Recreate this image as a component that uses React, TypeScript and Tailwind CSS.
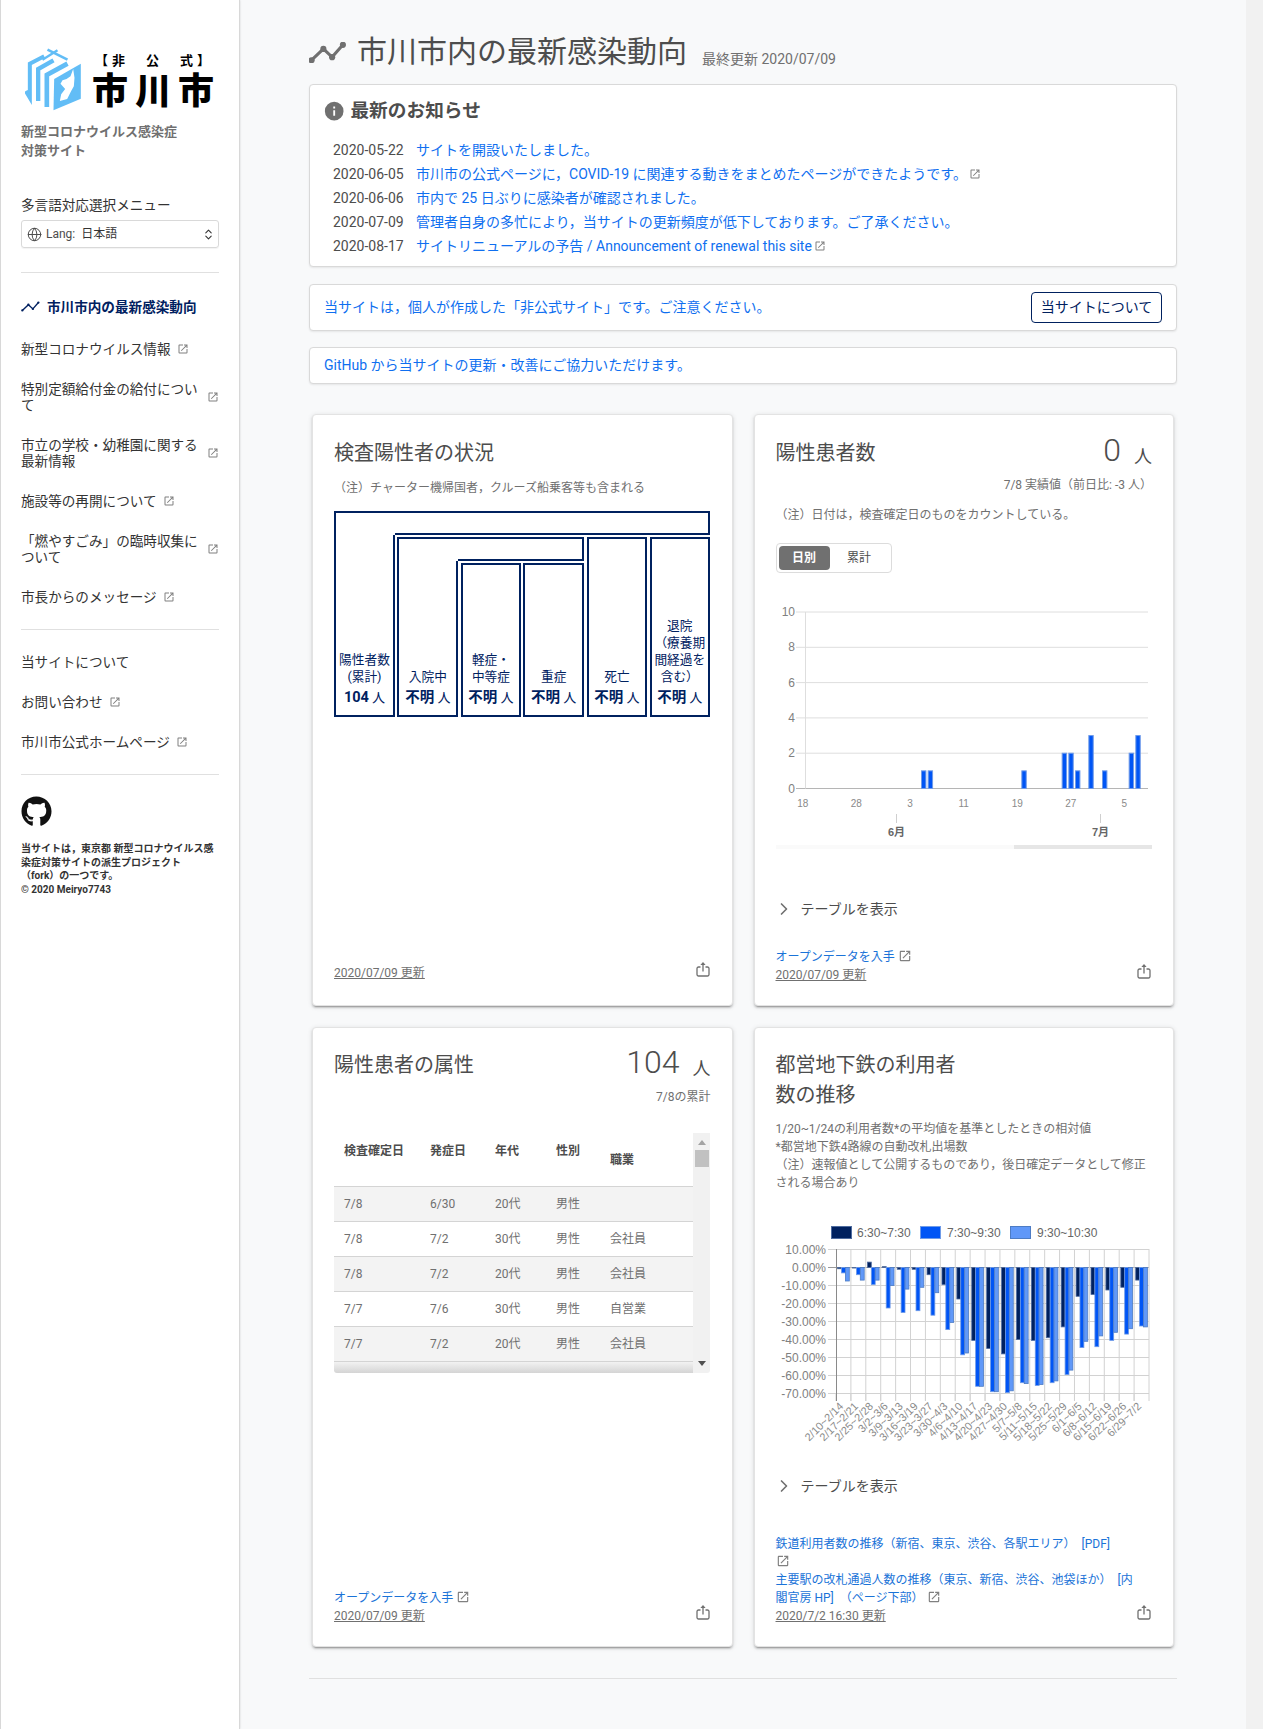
import { ChevronRight, ChevronsUpDown, Globe } from "lucide-react";
import { FaGithub } from "react-icons/fa";

const EXTERNAL =
  "M14,3V5H17.59L7.76,14.83L9.17,16.24L19,6.41V10H21V3M19,19H5V5H12V3H5C3.89,3 3,3.9 3,5V19A2,2 0 0,0 5,21H19A2,2 0 0,0 21,19V12H19V19Z";
const INFO =
  "M13,9H11V7H13M13,17H11V11H13M12,2A10,10 0 0,0 2,12A10,10 0 0,0 12,22A10,10 0 0,0 22,12A10,10 0 0,0 12,2Z";

// full-width punctuation
const LP = "\uFF08";
const RP = "\uFF09";
const CM = "\uFF0C";
const SP = "\u3000";

const ExternalIcon = ({ size = 12, className = "" }: { size?: number; className?: string }) => (
  <svg viewBox="0 0 24 24" width={size} height={size} className={`inline-block shrink-0 fill-[#808080] ${className}`}>
    <path d={EXTERNAL} />
  </svg>
);

const TrendIcon = ({ w, h, color, sw, r }: { w: number; h: number; color: string; sw: number; r: number }) => (
  <svg viewBox="0 0 36 20" width={w} height={h} className="shrink-0">
    <polyline points="2.5,17.5 14,6.5 22.5,14.5 33,2.5" fill="none" stroke={color} strokeWidth={sw} />
    {[
      [2.5, 17.5],
      [14, 6.5],
      [22.5, 14.5],
      [33, 2.5],
    ].map(([cx, cy]) => (
      <circle key={cx} cx={cx} cy={cy} r={r} fill={color} />
    ))}
  </svg>
);

const ShareButton = () => (
  <svg viewBox="0 0 14 15" width={14} height={15} className="mr-[1px] mb-[5px] shrink-0">
    <path
      d="M4.5 5 H2.5 a1.5 1.5 0 0 0 -1.5 1.5 V12.5 a1.5 1.5 0 0 0 1.5 1.5 H11.5 a1.5 1.5 0 0 0 1.5 -1.5 V6.5 a1.5 1.5 0 0 0 -1.5 -1.5 H9.5 M7 9.5 V2"
      fill="none"
      stroke="#707070"
      strokeWidth={1.3}
    />
    <path d="M4.4 3 L7 0 L9.6 3 Z" fill="#707070" />
  </svg>
);

const Logo = () => (
  <div className="flex items-start pl-[4px]">
    <svg viewBox="78 140 170 192" width={57} height={64} className="shrink-0">
      <g fill="none" stroke="#62bdf6">
        <path d="M145 148 L205 178" strokeWidth={8} />
        <path d="M130 178 L175 150" strokeWidth={7} />
        <path d="M80 272 L92 292 V190 L135 168" strokeWidth={12} />
        <path d="M117 302 V206 L163 180" strokeWidth={13} />
        <path d="M143 320 V224 L205 190" strokeWidth={14} />
      </g>
      <path d="M165 236 L245 190 V295 L163 330 Z" fill="#62bdf6" />
      <path
        d="M222 206 L214 228 L202 236 L190 240 L184 250 L198 266 L186 282 L182 302 L204 296 L216 272 L224 258 L226 232 Z"
        fill="#fff"
      />
    </svg>
    <div className="ml-[10px] flex flex-col pt-[5px] font-['Noto_Sans_CJK_JP',sans-serif] text-black">
      <div className="h-[16px] pl-[3px] text-[13px] leading-[16px] font-bold tracking-[4px] whitespace-pre">{`【非${SP}公${SP}式】`}</div>
      <div className="mt-[1px] h-[38px] text-[36px] leading-[38px] font-black tracking-[7px] whitespace-nowrap">市川市</div>
    </div>
  </div>
);

const topNav = [
  { text: "新型コロナウイルス情報" },
  { text: "特別定額給付金の給付について" },
  { text: "市立の学校・幼稚園に関する最新情報" },
  { text: "施設等の再開について" },
  { text: "「燃やすごみ」の臨時収集について" },
  { text: "市長からのメッセージ" },
];

const NavItem = ({ text, external = true }: { text: string; external?: boolean }) => (
  <li className="flex items-center py-[12px] text-[13.6px] leading-[16px] text-[#333]">
    <span className="max-w-[180px]">{text}</span>
    {external && <ExternalIcon className="ml-[6px]" />}
  </li>
);

const Sidebar = () => (
  <aside className="w-[240px] shrink-0 border-x border-[#d8d8d8] bg-white pt-[47px] pl-[20px] pr-[20px] shadow-[0_0_2px_rgba(0,0,0,0.15)]">
    <Logo />
    <p className="mt-[11px] text-[13px] leading-[19px] font-bold text-[#707070]">
      新型コロナウイルス感染症
      <br />
      対策サイト
    </p>
    <p className="mt-[36px] text-[13.6px] leading-[18px] text-[#333]">多言語対応選択メニュー</p>
    <div className="mt-[6px] flex h-[28px] items-center rounded-[3px] border border-[#d9d9d9] pl-[5px] pr-[3px] shadow-[0_1px_1px_rgba(0,0,0,0.05)]">
      <Globe size={15} className="text-[#4d4d4d]" strokeWidth={1.6} />
      <span className="ml-[4px] text-[12px] text-[#4d4d4d]">Lang:</span>
      <span className="ml-[6px] text-[12px] text-[#333]">日本語</span>
      <ChevronsUpDown size={13} className="ml-auto text-[#333]" />
    </div>
    <hr className="mt-[24px] border-[#e0e0e0]" />
    <ul className="mt-[13px]">
      <li className="flex items-center pt-[12.7px] pb-[14.7px] text-[13.6px] leading-[16px] font-bold text-[#002060]">
        <TrendIcon w={19} h={11} color="#002060" sw={2.6} r={2.2} />
        <span className="ml-[7px] whitespace-nowrap">市川市内の最新感染動向</span>
      </li>
      {topNav.map((item) => (
        <NavItem key={item.text} text={item.text} />
      ))}
    </ul>
    <hr className="mt-[12px] border-[#e0e0e0]" />
    <ul className="mt-[12px]">
      <NavItem text="当サイトについて" external={false} />
      <NavItem text="お問い合わせ" />
      <NavItem text="市川市公式ホームページ" />
    </ul>
    <hr className="mt-[12px] border-[#e0e0e0]" />
    <FaGithub size={31} className="mt-[21px] text-[#111]" />
    <p className="mt-[15px] text-[10px] leading-[13.5px] font-bold text-[#333]">
      {`当サイトは${CM}東京都 新型コロナウイルス感染症対策サイトの派生プロジェクト`}
      <br />
      {`${LP}fork${RP}の一つです。`}
      <br />© 2020 Meiryo7743
    </p>
  </aside>
);

const news = [
  { date: "2020-05-22", text: "サイトを開設いたしました。" },
  { date: "2020-06-05", text: `市川市の公式ページに${CM}COVID-19 に関連する動きをまとめたページができたようです。`, external: true },
  { date: "2020-06-06", text: "市内で 25 日ぶりに感染者が確認されました。" },
  { date: "2020-07-09", text: `管理者自身の多忙により${CM}当サイトの更新頻度が低下しております。ご了承ください。` },
  { date: "2020-08-17", text: "サイトリニューアルの予告 / Announcement of renewal this site", external: true },
];

const Notices = () => (
  <section className="rounded-[4px] border border-[#d9d9d9] bg-white pt-[13px] pb-[8px] pl-[13px] shadow-[0_1px_2px_rgba(0,0,0,0.08)]">
    <div className="flex items-center">
      <svg viewBox="0 0 24 24" width={22.4} height={22.4} className="fill-[#707070]">
        <path d={INFO} />
      </svg>
      <h3 className="ml-[5px] text-[18.7px] leading-[26px] font-bold text-[#4d4d4d]">最新のお知らせ</h3>
    </div>
    <ul className="mt-[14px] pl-[10px] text-[14px] leading-[24px]">
      {news.map((n) => (
        <li key={n.date} className="flex items-center">
          <span className="w-[83px] shrink-0 text-[#4d4d4d]">{n.date}</span>
          <span className="text-[#0f6ff0]">{n.text}</span>
          {n.external && <ExternalIcon className="ml-[2px]" />}
        </li>
      ))}
    </ul>
  </section>
);

const Alert = ({ children, height }: { children: React.ReactNode; height: string }) => (
  <section className={`flex items-center justify-between rounded-[4px] border border-[#d9d9d9] bg-white pr-[14px] pl-[14px] text-[14px] text-[#0f6ff0] shadow-[0_1px_2px_rgba(0,0,0,0.08)] ${height}`}>
    {children}
  </section>
);

const FlowBox = ({ label, value, className = "" }: { label: React.ReactNode; value: string; className?: string }) => (
  <div className={`flex flex-col items-center justify-end border-2 border-[#00215f] px-[1px] pb-[7px] text-center text-[12.7px] leading-[17px] text-[#00215f] ${className}`}>
    <div>{label}</div>
    <div className="mt-[3px] leading-[20px] whitespace-nowrap">
      <span className="text-[14.5px] font-bold">{value}</span> <span className="text-[13px]">人</span>
    </div>
  </div>
);

const FlowChart = () => (
  <div className="mt-[14px] flex h-[206px] w-[376px] flex-col">
    <div className="flex h-[24px] shrink-0">
      <div className="w-[61px] shrink-0 border-t-2 border-l-2 border-[#00215f]" />
      <div className="flex-1 border-y-2 border-r-2 border-[#00215f]" />
    </div>
    <div className="flex flex-1">
      <FlowBox
        className="w-[61px] border-t-0"
        label={
          <>
            陽性者数
            <br />
            (累計)
          </>
        }
        value="104"
      />
      <div className="ml-[2.4px] flex w-[187px] flex-col pt-[2px]">
        <div className="flex h-[24px] shrink-0">
          <div className="w-[61px] shrink-0 border-t-2 border-l-2 border-[#00215f]" />
          <div className="flex-1 border-y-2 border-r-2 border-[#00215f]" />
        </div>
        <div className="flex flex-1">
          <FlowBox className="w-[61px] border-t-0" label="入院中" value="不明" />
          <FlowBox
            className="mt-[2px] ml-[2.3px] w-[60.5px]"
            label={
              <>
                軽症・
                <br />
                中等症
              </>
            }
            value="不明"
          />
          <FlowBox className="mt-[2px] ml-[2.3px] w-[60.5px]" label="重症" value="不明" />
        </div>
      </div>
      <FlowBox className="mt-[2px] ml-[2.4px] w-[60.5px]" label="死亡" value="不明" />
      <FlowBox
        className="mt-[2px] ml-[2.4px] w-[60.5px]"
        label={
          <>
            退院
            <br />
            {`${LP}療養期`}
            <br />
            間経過を
            <br />
            {`含む${RP}`}
          </>
        }
        value="不明"
      />
    </div>
  </div>
);

const Card = ({ children, top = "pt-[22px]" }: { children: React.ReactNode; top?: string }) => (
  <article className={`flex flex-col rounded-[4px] border border-[#e3e3e3] bg-white px-[21px] pb-[21px] shadow-[0_3px_1px_-2px_rgba(0,0,0,0.2),0_2px_2px_0_rgba(0,0,0,0.14),0_1px_5px_0_rgba(0,0,0,0.12)] ${top}`}>
    {children}
  </article>
);

const Title = ({ children, className = "" }: { children: React.ReactNode; className?: string }) => (
  <h3 className={`text-[20px] leading-[30px] font-normal text-[#4d4d4d] ${className}`}>{children}</h3>
);

const Total = ({ value }: { value: string }) => (
  <div className="mt-[-2px] flex h-[30px] items-end leading-none text-[#4d4d4d]">
    <span className="text-[32px] font-light">{value}</span>
    <span className="ml-[13px] text-[18px]">人</span>
  </div>
);

const Footer = ({ date, children, className = "" }: { date: string; children?: React.ReactNode; className?: string }) => (
  <div className={`mt-auto flex items-end justify-between text-[12px] leading-[18px] ${className}`}>
    <div>
      {children}
      <span className="text-[#707070] underline">{date}</span>
    </div>
    <ShareButton />
  </div>
);

const OpenData = () => (
  <div className="text-[#1a73d8]">
    オープンデータを入手
    <ExternalIcon size={14} className="ml-[3px] align-[-2px]" />
  </div>
);

const ShowTable = ({ className = "" }: { className?: string }) => (
  <div className={`flex h-[20px] items-center text-[14px] text-[#4d4d4d] ${className}`}>
    <ChevronRight size={20} className="ml-[-2px] text-[#707070]" />
    <span className="ml-[7px]">テーブルを表示</span>
  </div>
);

const dailyBars = [
  [513, 1],
  [533, 1],
  [814, 1],
  [935, 2],
  [955, 2],
  [975, 1],
  [1015, 3],
  [1056, 1],
  [1136, 2],
  [1156, 3],
];

const DailyChart = () => {
  const gridY = [188.5, 153.2, 117.9, 82.6, 47.3, 12];
  return (
    <svg width={376} height={255} className="mt-[27px] block font-['Liberation_Sans',sans-serif]">
      {gridY.map((y, i) => (
        <g key={y}>
          <line x1={20} x2={372} y1={y} y2={y} stroke={i === 0 ? "#b5b5b5" : "#dedede"} />
          <text x={19} y={y + 4} textAnchor="end" fontSize={12} fill="#808080">
            {i * 2}
          </text>
        </g>
      ))}
      <line x1={29.5} x2={29.5} y1={12} y2={188.5} stroke="#dedede" />
      {dailyBars.map(([v, n]) => (
        <rect
          key={v}
          x={v / 3 - 26 + 0.5}
          y={188.5 - n * 17.65}
          width={4.4}
          height={n * 17.65}
          fill="#0055f5"
          stroke="#6f9be8"
        />
      ))}
      {[
        ["18", 26.7],
        ["28", 80.3],
        ["3", 134],
        ["11", 187.7],
        ["19", 241.3],
        ["27", 294.7],
        ["5", 348.3],
      ].map(([t, x]) => (
        <text key={t} x={x} y={207} textAnchor="middle" fontSize={10} fill="#8a8a8a">
          {t}
        </text>
      ))}
      {[
        ["6月", 120.5],
        ["7月", 324.5],
      ].map(([t, x]) => (
        <g key={t}>
          <line x1={x} x2={x} y1={214} y2={223} stroke="#cfcfcf" />
          <text x={x} y={236} textAnchor="middle" fontSize={11} fontWeight={700} fill="#666" className="font-['Liberation_Sans','Noto_Sans_CJK_JP',sans-serif]">
            {t}
          </text>
        </g>
      ))}
      <rect x={0} y={245} width={238} height={4} fill="#fafafa" />
      <rect x={238} y={245} width={138} height={4} fill="#e6e6e6" />
    </svg>
  );
};

const patients = [
  ["7/8", "6/30", "20代", "男性", ""],
  ["7/8", "7/2", "30代", "男性", "会社員"],
  ["7/8", "7/2", "20代", "男性", "会社員"],
  ["7/7", "7/6", "30代", "男性", "自営業"],
  ["7/7", "7/2", "20代", "男性", "会社員"],
];

const PatientTable = () => (
  <div className="mt-[27px] flex h-[240px] w-[376px] overflow-hidden rounded-b-[3px]">
    <div className="flex w-[359px] flex-col">
      <table className="w-full table-fixed border-collapse text-[12px] text-[#707070]">
        <colgroup>
          <col className="w-[86px]" />
          <col className="w-[65px]" />
          <col className="w-[61px]" />
          <col className="w-[54px]" />
          <col />
        </colgroup>
        <thead>
          <tr className="h-[53px] border-b border-[#d4d4d4] text-left align-top font-bold text-[#4d4d4d]">
            {["検査確定日", "発症日", "年代", "性別"].map((h) => (
              <th key={h} className="pt-[9px] pl-[10px] leading-[18px]">
                {h}
              </th>
            ))}
            <th className="pt-[18px] pl-[10px] leading-[18px]">職業</th>
          </tr>
        </thead>
        <tbody>
          {patients.map((row, i) => (
            <tr key={i} className={`h-[35px] border-b border-[#d4d4d4] ${i % 2 === 0 ? "bg-[#f3f3f3]" : "bg-white"}`}>
              {row.map((c, j) => (
                <td key={j} className="pl-[10px]">
                  {c}
                </td>
              ))}
            </tr>
          ))}
        </tbody>
      </table>
      <div className="mt-auto h-[12px] bg-gradient-to-b from-[#f2f2f2] to-[#d4d4d4]" />
    </div>
    <div className="flex w-[17px] flex-col items-center bg-[#f1f1f1]">
      <span className="mt-[7px] h-0 w-0 border-x-[4px] border-b-[5px] border-x-transparent border-b-[#a3a3a3]" />
      <span className="mt-[5px] h-[17px] w-[14px] bg-[#c1c1c1]" />
      <span className="mt-auto mb-[7px] h-0 w-0 border-x-[4px] border-t-[5px] border-x-transparent border-t-[#505050]" />
    </div>
  </div>
);

const subway = [
  ["2/10~2/14", -0.7, -3, -7.5],
  ["2/17~2/21", -0.3, -4, -7],
  ["2/25~2/28", 3, -9.5, -7],
  ["3/2~3/6", 0.5, -22.5, -10],
  ["3/9~3/13", -1, -25, -12],
  ["3/16~3/19", -1, -24, -11],
  ["3/23~3/27", -4, -26.5, -14],
  ["3/30~4/3", -9.5, -34.5, -30.5],
  ["4/6~4/10", -17.5, -48.5, -47.5],
  ["4/13~4/17", -40.5, -66, -66],
  ["4/20~4/23", -45, -69, -69],
  ["4/27~4/30", -48, -69.5, -68.5],
  ["5/7~5/8", -40, -64, -64.5],
  ["5/11~5/15", -40.5, -65.5, -65],
  ["5/18~5/22", -39, -64, -63],
  ["5/25~5/29", -33, -59.5, -57],
  ["6/1~6/5", -16, -44.5, -41],
  ["6/8~6/12", -15, -44, -38],
  ["6/15~6/19", -12.5, -40.5, -36],
  ["6/22~6/26", -11, -37, -34],
  ["6/29~7/2", -7, -32.5, -33],
] as const;

const series = [
  { name: "6:30~7:30", fill: "#00215f", stroke: "#4f6c9f", sx: 55, tx: 81 },
  { name: "7:30~9:30", fill: "#0055f5", stroke: "#6f9be8", sx: 144, tx: 171 },
  { name: "9:30~10:30", fill: "#6098f8", stroke: "#4d7cc4", sx: 234, tx: 261 },
];

const SubwayChart = () => {
  const left = 60;
  const right = 373;
  const top = 29;
  const step = 18;
  const groupW = (right - left) / subway.length;
  const zero = top + step;
  return (
    <svg width={376} height={228} className="mt-[28px] block font-['Liberation_Sans',sans-serif]">
      {series.map((s) => (
        <g key={s.name}>
          <rect x={s.sx + 0.5} y={6.5} width={20} height={12} fill={s.fill} stroke={s.stroke} />
          <text x={s.tx} y={17} fontSize={12} fill="#666">
            {s.name}
          </text>
        </g>
      ))}
      {Array.from({ length: 9 }, (_, i) => {
        const y = top + i * step + 0.5;
        const v = 10 - i * 10;
        return (
          <g key={v}>
            <line x1={left - 8} x2={right} y1={y} y2={y} stroke={v === 0 ? "#9a9a9a" : "#d2d2d2"} />
            <text x={50} y={y + 4.5} textAnchor="end" fontSize={12} fill="#808080">
              {v.toFixed(2)}%
            </text>
          </g>
        );
      })}
      {subway.map((row, i) => {
        const x = left + i * groupW;
        return (
          <g key={row[0]}>
            <line x1={x + groupW} x2={x + groupW} y1={top} y2={top + 8 * step + 8} stroke="#d2d2d2" />
            <line x1={x} x2={x} y1={top + 8 * step} y2={top + 8 * step + 8} stroke="#d2d2d2" />
            {series.map((s, j) => {
              const v = row[j + 1] as number;
              const h = Math.abs(v) * 1.8;
              return (
                <rect
                  key={s.name}
                  x={x + 1.6 + j * 3.9}
                  y={(v > 0 ? zero - h : zero) + 0.5}
                  width={3.9}
                  height={h}
                  fill={s.fill}
                  stroke={s.stroke}
                  strokeWidth={0.8}
                />
              );
            })}
            <text
              x={x + 8}
              y={top + 8 * step + 14}
              textAnchor="end"
              fontSize={11}
              fill="#8a8a8a"
              transform={`rotate(-45 ${x + 8} ${top + 8 * step + 14})`}
            >
              {row[0]}
            </text>
          </g>
        );
      })}
      <line x1={left + 0.5} x2={left + 0.5} y1={top} y2={top + 8 * step + 8} stroke="#8a8a8a" />
    </svg>
  );
};

const App = () => (
  <div className="flex min-h-[1729px] bg-[#f8f9fa] font-['Roboto','Noto_Sans_CJK_JP',sans-serif]">
    <Sidebar />
    <main className="flex-1 px-[69px] pt-[30px]">
      <div className="flex h-[44px] items-center">
        <TrendIcon w={37} h={21} color="#707070" sw={3} r={3} />
        <h2 className="ml-[11px] text-[30px] leading-[44px] font-normal text-[#4d4d4d]">市川市内の最新感染動向</h2>
        <span className="mt-[14px] ml-[15px] text-[14px] text-[#707070]">最終更新 2020/07/09</span>
      </div>
      <div className="mt-[10px] flex flex-col">
        <Notices />
        <div className="mt-[17px]">
          <Alert height="h-[47px]">
            <span>{`当サイトは${CM}個人が作成した「非公式サイト」です。ご注意ください。`}</span>
            <span className="flex h-[31px] w-[131px] items-center justify-center rounded-[4px] border border-[#00215f] text-[14px] text-[#00215f]">
              当サイトについて
            </span>
          </Alert>
        </div>
        <div className="mt-[16px]">
          <Alert height="h-[37px]">
            <span>GitHub から当サイトの更新・改善にご協力いただけます。</span>
          </Alert>
        </div>
      </div>

      <div className="mt-[30px] grid grid-cols-2 gap-x-[21px] gap-y-[21px] px-[3px] [grid-template-rows:592px_620px]">
        <Card top="pt-[23px]">
          <Title>検査陽性者の状況</Title>
          <p className="mt-[11px] text-[12px] leading-[18px] text-[#707070]">{`${LP}注${RP}チャーター機帰国者${CM}クルーズ船乗客等も含まれる`}</p>
          <FlowChart />
          <Footer date="2020/07/09 更新" className="mb-[2px]" />
        </Card>

        <Card top="pt-[23px]">
          <div className="flex items-start justify-between">
            <Title>陽性患者数</Title>
            <Total value="0" />
          </div>
          <p className="mt-[8px] text-right text-[12px] leading-[18px] text-[#707070]">{`7/8 実績値${LP}前日比: -3 人${RP}`}</p>
          <p className="mt-[12px] text-[12px] leading-[18px] text-[#707070]">{`${LP}注${RP}日付は${CM}検査確定日のものをカウントしている。`}</p>
          <div className="mt-[19px] flex h-[30px] w-[116px] items-center rounded-[4px] border border-[#dcdcdc] px-[2px] text-[12px]">
            <span className="flex h-[24px] w-[51px] items-center justify-center rounded-[4px] bg-[#707070] font-bold text-white">日別</span>
            <span className="flex h-[24px] flex-1 items-center justify-center text-[#4d4d4d]">累計</span>
          </div>
          <DailyChart />
          <ShowTable className="mt-[44px]" />
          <Footer date="2020/07/09 更新">
            <OpenData />
          </Footer>
        </Card>

        <Card>
          <div className="flex items-start justify-between">
            <Title>陽性患者の属性</Title>
            <Total value="104" />
          </div>
          <p className="mt-[8px] text-right text-[12px] leading-[18px] text-[#707070]">7/8の累計</p>
          <PatientTable />
          <Footer date="2020/07/09 更新">
            <OpenData />
          </Footer>
        </Card>

        <Card>
          <Title className="max-w-[190px]">都営地下鉄の利用者数の推移</Title>
          <p className="mt-[10px] text-[12px] leading-[18px] text-[#707070]">
            1/20~1/24の利用者数*の平均値を基準としたときの相対値
            <br />
            *都営地下鉄4路線の自動改札出場数
            <br />
            {`${LP}注${RP}速報値として公開するものであり${CM}後日確定データとして修正される場合あり`}
          </p>
          <SubwayChart />
          <ShowTable className="mt-[28px]" />
          <Footer date="2020/7/2 16:30 更新">
            <div className="text-[#1a73d8]">
              {`鉄道利用者数の推移${LP}新宿、東京、渋谷、各駅エリア${RP}${SP}[PDF]`}
              <br />
              <ExternalIcon size={14} className="align-[-2px]" />
              <br />
              {`主要駅の改札通過人数の推移${LP}東京、新宿、渋谷、池袋ほか${RP}${SP}[内`}
              <br />
              {`閣官房 HP]\u00A0 ${LP}ページ下部${RP}`}
              <ExternalIcon size={14} className="ml-[3px] align-[-2px]" />
            </div>
          </Footer>
        </Card>
      </div>
      <hr className="mt-[31px] border-[#e0e0e0]" />
    </main>
    <div className="w-[17px] shrink-0 bg-[#f1f1f1]" />
  </div>
);

export default App;
